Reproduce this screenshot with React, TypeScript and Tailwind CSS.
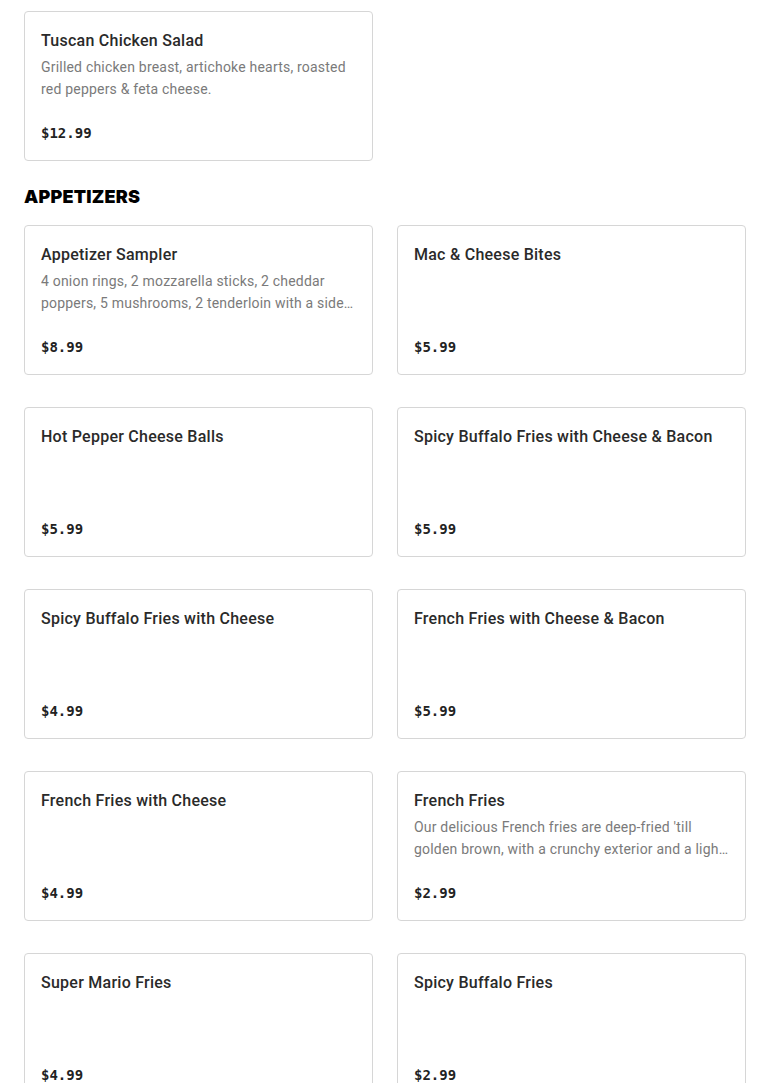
type Item = { name: string; desc?: string; price: string };

const salads: Item[] = [
  {
    name: 'Tuscan Chicken Salad',
    desc: 'Grilled chicken breast, artichoke hearts, roasted red peppers & feta cheese.',
    price: '$12.99',
  },
];

const appetizers: Item[] = [
  {
    name: 'Appetizer Sampler',
    desc: '4 onion rings, 2 mozzarella sticks, 2 cheddar poppers, 5 mushrooms, 2 tenderloin with a side of ranch and marinara sauce.',
    price: '$8.99',
  },
  { name: 'Mac & Cheese Bites', price: '$5.99' },
  { name: 'Hot Pepper Cheese Balls', price: '$5.99' },
  { name: 'Spicy Buffalo Fries with Cheese & Bacon', price: '$5.99' },
  { name: 'Spicy Buffalo Fries with Cheese', price: '$4.99' },
  { name: 'French Fries with Cheese & Bacon', price: '$5.99' },
  { name: 'French Fries with Cheese', price: '$4.99' },
  {
    name: 'French Fries',
    desc: "Our delicious French fries are deep-fried 'till golden brown, with a crunchy exterior and a light, fluffy interior.",
    price: '$2.99',
  },
  { name: 'Super Mario Fries', price: '$4.99' },
  { name: 'Spicy Buffalo Fries', price: '$2.99' },
];

function MenuCard({ item }: { item: Item }) {
  return (
    <div className="h-[150px] flex flex-col rounded border border-[#d6d6d6] bg-white px-4 py-4">
      <div className="text-[16px] leading-6 font-medium text-[#2a2a2a] font-['Roboto',sans-serif] tracking-[0.25px] translate-y-[1px]">
        {item.name}
      </div>
      {item.desc && (
        <p className="mt-1 text-[14px] leading-[22px] text-[#7a7a7a] font-['Roboto',sans-serif] tracking-[0.2px] line-clamp-2">
          {item.desc}
        </p>
      )}
      <div className="mt-auto text-[14px] leading-6 font-bold text-[#222] font-['DejaVu_Sans_Mono',monospace] translate-y-[1px]">
        {item.price}
      </div>
    </div>
  );
}

export default function App() {
  return (
    <div className="min-h-screen bg-white px-6 pt-[11px]">
      <div className="grid grid-cols-2 gap-x-6 gap-y-8">
        {salads.map(item => (
          <MenuCard key={item.name} item={item} />
        ))}
      </div>
      <h2 className="mt-6 mb-4 text-[18px] leading-6 font-black uppercase text-black font-['Inter',sans-serif] tracking-[0.2px]">
        Appetizers
      </h2>
      <div className="grid grid-cols-2 gap-x-6 gap-y-8">
        {appetizers.map(item => (
          <MenuCard key={item.name} item={item} />
        ))}
      </div>
    </div>
  );
}
